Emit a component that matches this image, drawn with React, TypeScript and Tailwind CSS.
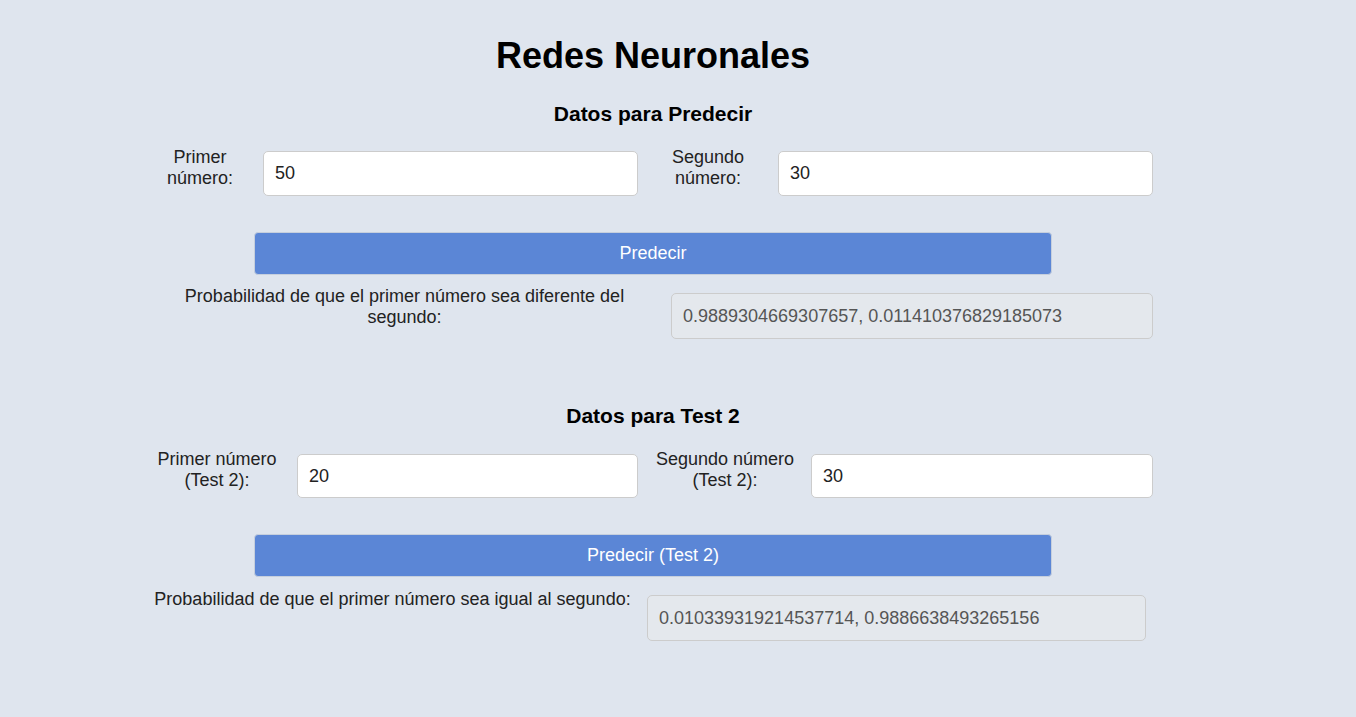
export default function App() {
  return (
    <div className="min-h-[717px] w-full bg-[#dfe5ee] text-[#222] font-['Liberation_Sans',Arial,sans-serif] text-[18px]">
      <div className="ml-[140px] w-[1026px] pt-[35px] flex flex-col">
        <h1 className="text-[36px] leading-[41px] font-bold text-center text-black">Redes Neuronales</h1>

        {/* Predecir */}
        <h3 className="mt-[26px] text-[21px] leading-[24px] font-bold text-center text-black">Datos para Predecir</h3>
        <div className="mt-[25px] flex items-center h-[45px]">
          <label className="mb-[12px] ml-[10px] w-[100px] text-center leading-[21px]">Primer número:</label>
          <input
            readOnly
            value="50"
            className="ml-[13px] w-[375px] h-[45px] rounded-[5px] border border-[#ccc] bg-white px-[11px] text-[18px] text-[#222] outline-none"
          />
          <label className="mb-[12px] ml-[20px] w-[100px] text-center leading-[21px]">Segundo número:</label>
          <input
            readOnly
            value="30"
            className="ml-[20px] w-[375px] h-[45px] rounded-[5px] border border-[#ccc] bg-white px-[11px] text-[18px] text-[#222] outline-none"
          />
        </div>
        <button className="mt-[36px] ml-[114px] w-[798px] h-[43px] rounded-[4px] border border-[#c6cfdd] bg-[#5b86d6] text-white text-[18px]">
          Predecir
        </button>
        <div className="mt-[11px] flex items-start">
          <label className="ml-[10px] w-[509px] text-center leading-[21px]">
            Probabilidad de que el primer número sea diferente del segundo:
          </label>
          <input
            readOnly
            value="0.9889304669307657, 0.011410376829185073"
            className="mt-[7px] ml-[12px] w-[482px] h-[46px] rounded-[5px] border border-[#ccc] bg-[#e4e8ed] px-[11px] text-[18px] text-[#555] outline-none"
          />
        </div>

        {/* Test 2 */}
        <h3 className="mt-[65px] text-[21px] leading-[24px] font-bold text-center text-black">Datos para Test 2</h3>
        <div className="mt-[26px] flex items-center h-[44px]">
          <label className="mb-[13px] ml-[12px] w-[130px] text-center leading-[21px]">Primer número (Test 2):</label>
          <input
            readOnly
            value="20"
            className="ml-[15px] w-[341px] h-[44px] rounded-[5px] border border-[#ccc] bg-white px-[11px] text-[18px] text-[#222] outline-none"
          />
          <label className="mb-[13px] ml-[17px] w-[140px] text-center leading-[21px]">Segundo número (Test 2):</label>
          <input
            readOnly
            value="30"
            className="ml-[16px] w-[342px] h-[44px] rounded-[5px] border border-[#ccc] bg-white px-[11px] text-[18px] text-[#222] outline-none"
          />
        </div>
        <button className="mt-[36px] ml-[114px] w-[798px] h-[43px] rounded-[4px] border border-[#c6cfdd] bg-[#5b86d6] text-white text-[18px]">
          Predecir (Test 2)
        </button>
        <div className="mt-[12px] flex items-start">
          <label className="ml-[8px] w-[489px] text-center leading-[21px]">
            Probabilidad de que el primer número sea igual al segundo:
          </label>
          <input
            readOnly
            value="0.010339319214537714, 0.9886638493265156"
            className="mt-[6px] ml-[10px] w-[499px] h-[46px] rounded-[5px] border border-[#ccc] bg-[#e4e8ed] px-[11px] text-[18px] text-[#555] outline-none"
          />
        </div>
      </div>
    </div>
  )
}
